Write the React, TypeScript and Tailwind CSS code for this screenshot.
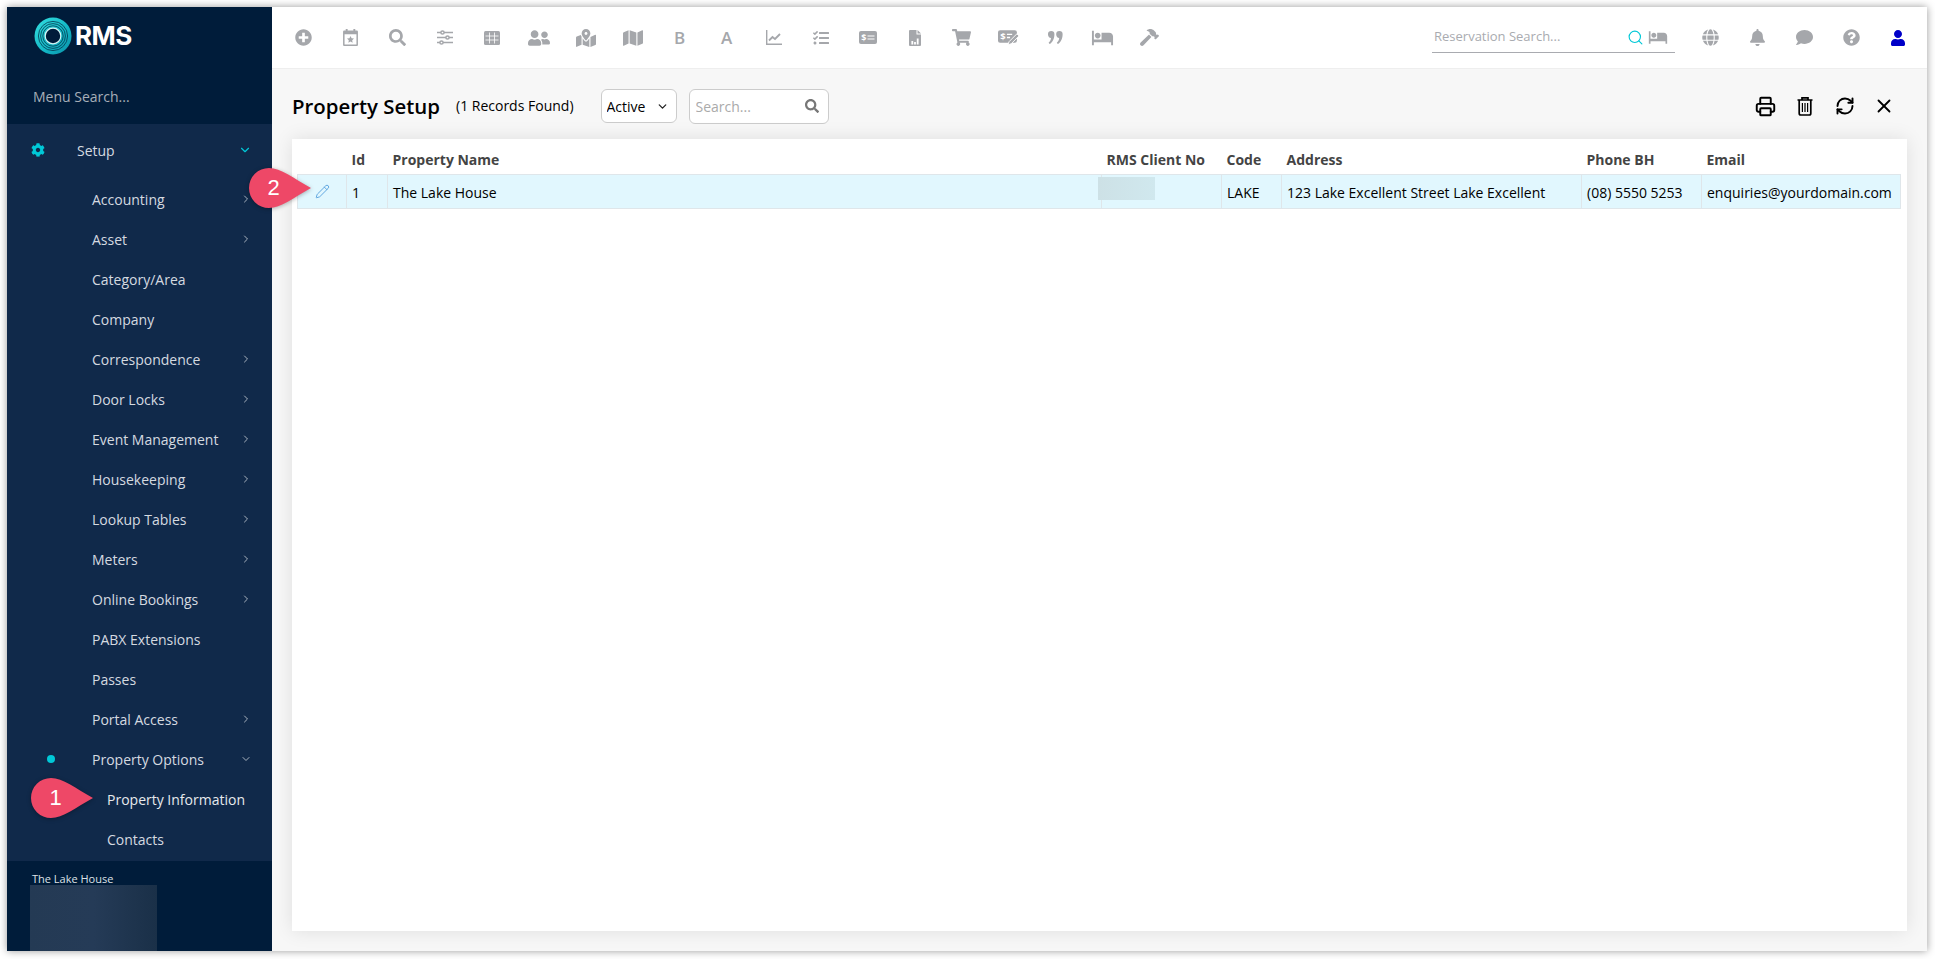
import { ChevronDown, ChevronRight, Pencil, Printer, RefreshCw, Search, X } from "lucide-react";
import {
  FaBell,
  FaCog,
  FaComment,
  FaGlobe,
  FaHammer,
  FaMap,
  FaMapMarkedAlt,
  FaPlusCircle,
  FaQuestionCircle,
  FaSearch,
  FaShoppingCart,
  FaTasks,
  FaUser,
  FaUserFriends,
} from "react-icons/fa";
import { MdHotel } from "react-icons/md";

function Logo() {
  return (
    <svg width="38" height="38" viewBox="0 0 38 38">
      <defs>
        <linearGradient id="ring" x1="0" y1="0" x2="1" y2="1">
          <stop offset="0" stopColor="#35e0e0" />
          <stop offset="0.6" stopColor="#11b5c4" />
          <stop offset="1" stopColor="#0b8ea6" />
        </linearGradient>
      </defs>
      <circle cx="19" cy="19" r="18.5" fill="url(#ring)" />
      <circle cx="19" cy="19" r="14.6" fill="none" stroke="#04384f" strokeWidth="0.8" />
      <circle cx="19" cy="19" r="12.4" fill="none" stroke="#04384f" strokeWidth="0.8" />
      <circle cx="19" cy="19" r="10.2" fill="none" stroke="#04384f" strokeWidth="0.8" />
      <circle cx="19" cy="19" r="7.8" fill="#001c3a" stroke="#d4f6f6" strokeWidth="1.2" />
    </svg>
  );
}

function CalendarStar() {
  return (
    <svg width="15" height="17" viewBox="0 0 14 16" fill="currentColor">
      <rect x="2.5" y="0" width="1.8" height="3" />
      <rect x="9.7" y="0" width="1.8" height="3" />
      <path d="M1 1.5h12a1 1 0 0 1 1 1V15a1 1 0 0 1-1 1H1a1 1 0 0 1-1-1V2.5a1 1 0 0 1 1-1zM1.4 5v9.6h11.2V5z" fillRule="evenodd" />
      <path d="M7 6.6l1 2.1 2.3.3-1.7 1.6.4 2.3L7 11.8l-2 1.1.4-2.3-1.7-1.6 2.3-.3z" />
    </svg>
  );
}

function Sliders() {
  return (
    <svg width="16" height="15" viewBox="0 0 16 15" fill="none" stroke="currentColor" strokeWidth="1.5">
      <path d="M0 2.5h4M7 2.5h9M0 7.5h9M12 7.5h4M0 12.5h3M6 12.5h10" />
      <circle cx="5.5" cy="2.5" r="1.6" />
      <circle cx="10.5" cy="7.5" r="1.6" />
      <circle cx="4.5" cy="12.5" r="1.6" />
    </svg>
  );
}

function GridTable() {
  return (
    <svg width="16" height="14" viewBox="0 0 16 14">
      <rect width="16" height="14" rx="1.5" fill="currentColor" />
      <path d="M1.5 5h13M1.5 9h13M5.5 1.5v11M10.5 1.5v11" stroke="#fff" strokeWidth="0.8" />
    </svg>
  );
}

function LineChart() {
  return (
    <svg width="16" height="15" viewBox="0 0 16 15" fill="none" stroke="currentColor">
      <path d="M.7 0v14.2H16" strokeWidth="1.4" />
      <path d="M3 10.5l3.5-3.5 2.5 2 5-5" strokeWidth="1.8" />
    </svg>
  );
}

function MoneyCard() {
  return (
    <svg width="18" height="13" viewBox="0 0 18 13">
      <rect width="18" height="13" rx="2" fill="currentColor" />
      <text x="2.2" y="10" fontSize="9" fontWeight="700" fill="#fff" fontFamily="Open Sans, sans-serif">$</text>
      <path d="M8.5 5h7M8.5 8h7" stroke="#fff" strokeWidth="1.2" />
    </svg>
  );
}

function FileChart() {
  return (
    <svg width="12" height="16" viewBox="0 0 12 16">
      <path d="M1 0h6.5v4.5H12V15a1 1 0 0 1-1 1H1a1 1 0 0 1-1-1V1a1 1 0 0 1 1-1z" fill="currentColor" />
      <path d="M8.5 0L12 3.5H8.5z" fill="currentColor" />
      <path d="M2.4 11h1.8v3.5H2.4zM5.1 12h1.8v2.5H5.1zM7.8 8.5h1.8v6H7.8z" fill="#fff" />
    </svg>
  );
}

function MoneyEdit() {
  return (
    <svg width="21" height="17" viewBox="0 0 20 16">
      <rect y="1" width="18" height="12" rx="2" fill="currentColor" />
      <text x="2.2" y="10.5" fontSize="9" fontWeight="700" fill="#fff" fontFamily="Open Sans, sans-serif">$</text>
      <path d="M8.5 5h5M8.5 8h3" stroke="#fff" strokeWidth="1.2" />
      <path d="M18 4.5l2 2-7.5 7.5-3 1 1-3z" fill="currentColor" stroke="#fff" strokeWidth="0.9" />
    </svg>
  );
}

function Quote() {
  return (
    <svg width="15" height="13" viewBox="0 0 15 13" fill="currentColor">
      <path d="M3.2 0a3.2 3.2 0 0 1 3.2 3.4C6.4 7.6 4.4 11.4 1.6 13L.6 11.8C2 10.6 2.8 9 3 7 1.300 7 0 5.300 0 3.400A3.200 3.200 0 0 1 3.200 0z" />
      <path d="M11.400 0a3.200 3.200 0 0 1 3.200 3.400c0 4.200-2 8-4.800 9.600l-1-1.200C10.200 10.600 11 9 11.200 7c-1.700 0-3-1.700-3-3.600A3.200 3.200 0 0 1 11.400 0z" />
    </svg>
  );
}

function Trash() {
  return (
    <svg width="16" height="20" viewBox="0 0 16 20" fill="none" stroke="currentColor" strokeWidth="1.7">
      <path d="M.5 4h15M5 4V1.8h6V4" />
      <path d="M2.2 4v13.2c0 1 .7 1.8 1.6 1.8h8.4c.9 0 1.6-.8 1.6-1.8V4" />
      <path d="M5.4 7v9M8 7v9M10.600 7v9" strokeWidth="1.2" />
    </svg>
  );
}

function Callout({ n, className }: { n: string; className: string }) {
  return (
    <div className={`absolute w-[62px] h-10 ${className}`}>
      <svg width="62" height="40" viewBox="0 0 62 40" className="drop-shadow-[0_1px_2px_rgba(0,0,0,0.3)]">
        <path d="M20 0C32 0 44 10 62 20C44 30 32 40 20 40A20 20 0 0 1 20 0Z" fill="#ee4867" />
      </svg>
      <span className="absolute left-[14px] top-0 w-[21px] text-center leading-10 text-[22px] text-white font-['Liberation_Sans',sans-serif]">
        {n}
      </span>
    </div>
  );
}

const toolbar = [
  <FaPlusCircle size={17} />,
  <CalendarStar />,
  <FaSearch size={17} />,
  <Sliders />,
  <GridTable />,
  <FaUserFriends size={22} />,
  <FaMapMarkedAlt size={20} />,
  <FaMap size={20} />,
  <span className="text-[17px] leading-5 font-semibold">B</span>,
  <span className="text-[17px] leading-5 font-semibold">A</span>,
  <LineChart />,
  <FaTasks size={16} />,
  <MoneyCard />,
  <FileChart />,
  <FaShoppingCart size={19} />,
  <MoneyEdit />,
  <Quote />,
  <MdHotel size={23} />,
  <FaHammer size={19} />,
];

const menu = [
  { name: "Accounting", more: true },
  { name: "Asset", more: true },
  { name: "Category/Area" },
  { name: "Company" },
  { name: "Correspondence", more: true },
  { name: "Door Locks", more: true },
  { name: "Event Management", more: true },
  { name: "Housekeeping", more: true },
  { name: "Lookup Tables", more: true },
  { name: "Meters", more: true },
  { name: "Online Bookings", more: true },
  { name: "PABX Extensions" },
  { name: "Passes" },
  { name: "Portal Access", more: true },
];

const columns = ["", "Id", "Property Name", "RMS Client No", "Code", "Address", "Phone BH", "Email"];

export default function App() {
  return (
    <div className="w-[1935px] h-[959px] bg-white pl-[7px] pt-[7px] overflow-hidden font-['Open_Sans',sans-serif] text-[14px]">
      <div className="relative flex w-[1920px] h-[944px] shadow-[0_0_8px_rgba(0,0,0,0.4)]">
        {/* sidebar */}
        <aside className="flex flex-col w-[265px] shrink-0 bg-[#10294a]">
          <div className="h-[117px] bg-[#001c3a] shrink-0">
            <div className="flex items-center pl-[27px] pt-[10px]">
              <Logo />
              <span className="ml-[3px] text-[26px] leading-[38px] font-bold text-white font-['Inter',sans-serif] tracking-[-0.5px]">RMS</span>
            </div>
            <input
              placeholder="Menu Search..."
              className="block mt-[31px] ml-[26px] w-[200px] bg-transparent outline-none text-[14px] placeholder:text-[#a6aeb8]"
            />
          </div>

          <div className="flex-1 pt-[6px]">
            <div className="flex items-center h-10 mb-[9px] pr-[20px] text-[#d5dae0]">
              <FaCog size={14} className="ml-[24px] text-[#00c8d7]" />
              <span className="ml-[32px] flex-1">Setup</span>
              <ChevronDown size={14} className="text-[#00c8d7]" />
            </div>
            {menu.map((m) => (
              <div key={m.name} className="flex items-center justify-between h-10 pl-[85px] pr-[20px] text-[#d5dae0]">
                <span>{m.name}</span>
                {m.more && <ChevronRight size={12} className="text-[#a9b3bf]" />}
              </div>
            ))}
            <div className="flex items-center h-10 pl-[40px] pr-[20px] text-[#d5dae0]">
              <span className="w-2 h-2 mr-[37px] rounded-full bg-[#00c8d7]" />
              <span className="flex-1">Property Options</span>
              <ChevronDown size={12} className="text-[#a9b3bf]" />
            </div>
            <div className="flex items-center h-10 pl-[100px] text-[#e6e9ed]">Property Information</div>
            <div className="flex items-center h-10 pl-[100px] text-[#d5dae0]">Contacts</div>
          </div>

          <div className="h-[90px] shrink-0 bg-[#001c3a] pt-[12px] overflow-hidden">
            <div className="pl-[25px] text-[11px] leading-[12px] text-[#dde2e7]">The Lake House</div>
            <div className="ml-[23px] w-[127px] h-[68px] bg-gradient-to-r from-[#243a54] via-[#253b57] to-[#1a3048]" />
          </div>
        </aside>

        {/* main */}
        <main className="flex flex-col flex-1 min-w-0 bg-[#f7f7f7]">
          <header className="flex items-center h-[62px] shrink-0 bg-white border-b border-[#eeeeee] pl-[8px] pr-[7px] text-[#a5a7ab]">
            {toolbar.map((icon, i) => (
              <div key={i} className="flex items-center justify-center w-[47px] h-5">
                {icon}
              </div>
            ))}
            <div className="ml-auto flex items-center w-[243px] h-[31px] border-b border-[#a9abb0] pl-[2px]">
              <input
                placeholder="Reservation Search..."
                className="w-[190px] bg-transparent outline-none text-[13px] placeholder:text-[#a9abb0]"
              />
              <Search size={17} strokeWidth={1.6} className="ml-[3px] text-[#00c8d7]" />
              <MdHotel size={20} className="ml-[4px]" />
            </div>
            <div className="flex items-center ml-[12px]">
              <div className="flex items-center justify-center w-[47px]"><FaGlobe size={17} /></div>
              <div className="flex items-center justify-center w-[47px]"><FaBell size={17} /></div>
              <div className="flex items-center justify-center w-[47px]"><FaComment size={17} /></div>
              <div className="flex items-center justify-center w-[47px]"><FaQuestionCircle size={17} /></div>
              <div className="flex items-center justify-center w-[45px] text-[#0000c8]"><FaUser size={16} /></div>
            </div>
          </header>

          <div className="flex items-center h-[70px] shrink-0 pl-[20px] pr-[25px] pt-[4px]">
            <h1 className="text-[20.4px] font-semibold text-black w-[148px] whitespace-nowrap">Property Setup</h1>
            <span className="ml-[16px] mb-[2px] text-[14px] text-black whitespace-nowrap">(1 Records Found)</span>
            <div className="flex items-center ml-[27px] w-[76px] h-[34px] bg-white border border-[#cccccc] rounded-md pl-[5px] pr-[7px]">
              <select className="w-full min-w-0 appearance-none bg-transparent outline-none text-[14px] text-black">
                <option>Active</option>
              </select>
              <ChevronDown size={13} strokeWidth={2.4} className="shrink-0 text-[#222222]" />
            </div>
            <div className="flex items-center ml-[12px] w-[140px] h-[35px] bg-white border border-[#cccccc] rounded-md pl-[6px] pr-[9px]">
              <input placeholder="Search..." className="w-full min-w-0 bg-transparent outline-none text-[14px] placeholder:text-[#aaaaaa]" />
              <FaSearch size={14} className="text-[#777777] shrink-0" />
            </div>
            <div className="ml-auto flex items-center text-black">
              <div className="flex justify-center w-[39px]"><Printer size={21} strokeWidth={2.2} /></div>
              <div className="flex justify-center w-[39px]"><Trash /></div>
              <div className="flex justify-center w-[41px]"><RefreshCw size={20} strokeWidth={2.3} /></div>
              <div className="flex justify-center w-[37px]"><X size={22} strokeWidth={2} /></div>
            </div>
          </div>

          <div className="flex-1 mx-5 mb-5 px-[5px] bg-white shadow-[0_0_18px_rgba(0,0,0,0.1)]">
            <table className="w-[1603px] table-fixed border-collapse">
              <colgroup>
                <col className="w-[49px]" />
                <col className="w-[41px]" />
                <col className="w-[714px]" />
                <col className="w-[120px]" />
                <col className="w-[60px]" />
                <col className="w-[300px]" />
                <col className="w-[120px]" />
                <col className="w-[199px]" />
              </colgroup>
              <thead>
                <tr className="h-[35px]">
                  {columns.map((c) => (
                    <th key={c} className="pl-[5px] pt-[6px] text-left font-bold text-[#444444] whitespace-nowrap">{c}</th>
                  ))}
                </tr>
              </thead>
              <tbody>
                <tr className="h-[34px] bg-[#e1f7fe] text-black">
                  <td className="border border-[#dfe6ea]">
                    <div className="flex justify-center">
                      <Pencil size={15} strokeWidth={1.4} className="text-[#4f9cdc]" />
                    </div>
                  </td>
                  <td className="pl-[5px] pt-[3px] border border-[#dfe6ea]">1</td>
                  <td className="pl-[5px] pt-[3px] border border-[#dfe6ea]">The Lake House</td>
                  <td className="relative border border-[#dfe6ea]">
                    <div className="absolute left-[-4px] top-[2px] w-[57px] h-[23px] bg-gradient-to-r from-[#cde1e6] to-[#d0e8ee]" />
                  </td>
                  <td className="pl-[5px] pt-[3px] border border-[#dfe6ea]">LAKE</td>
                  <td className="pl-[5px] pt-[3px] border border-[#dfe6ea] whitespace-nowrap">123 Lake Excellent Street Lake Excellent</td>
                  <td className="pl-[5px] pt-[3px] border border-[#dfe6ea] whitespace-nowrap">(08) 5550 5253</td>
                  <td className="pl-[5px] pt-[3px] border border-[#dfe6ea] whitespace-nowrap">enquiries@yourdomain.com</td>
                </tr>
              </tbody>
            </table>
          </div>
        </main>

        <Callout n="2" className="left-[242px] top-[161px]" />
        <Callout n="1" className="left-[24px] top-[771px]" />
      </div>
    </div>
  );
}
